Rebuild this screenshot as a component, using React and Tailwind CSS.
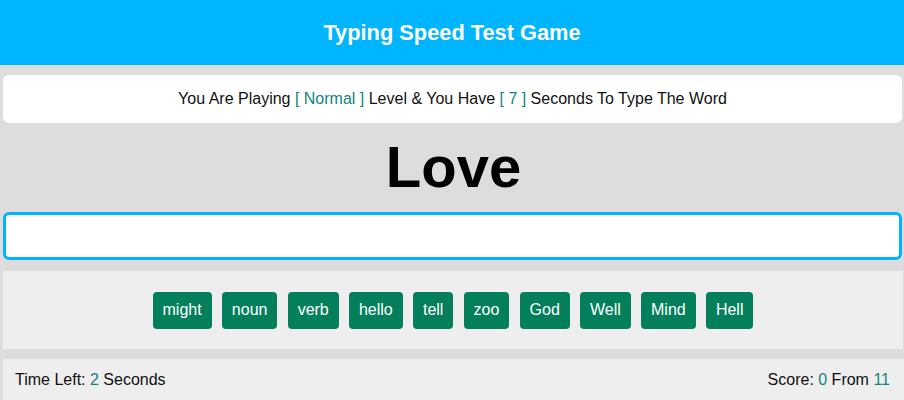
import React from "react";

const words = ["might", "noun", "verb", "hello", "tell", "zoo", "God", "Well", "Mind", "Hell"];

export default function App() {
  return (
    <div className="min-h-[400px] bg-[#dddddd] text-[#111] font-['Liberation_Sans',Arial,sans-serif]">
      <div className="h-[65px] bg-[#00b5ff] flex items-center justify-center">
        <h1 className="text-white font-bold text-[21.8px] leading-none">Typing Speed Test Game</h1>
      </div>
      <div className="mt-[10px] mx-[3px] mr-[2px] h-[48px] bg-white rounded-[6px] flex items-center justify-center text-[16px]">
        <span>
          You Are Playing <span className="text-[#128380]">[ Normal ]</span> Level &amp; You Have{" "}
          <span className="text-[#128380]">[ 7 ]</span> Seconds To Type The Word
        </span>
      </div>
      <div className="mt-[14px] mb-[15px] h-[60px] pl-[3px] text-center text-[58px] leading-[60px] font-bold text-black">Love</div>
      <input
        className="block mx-[3px] w-[899px] h-[48px] bg-white border-[3px] border-[#00b5ff] rounded-[6px] outline-none px-2 text-[16px]"
        type="text"
      />
      <div className="mt-[11px] mx-[3px] mr-[1px] h-[78px] bg-[#eeeeee] flex items-center justify-center gap-[10.2px]">
        {words.map((w) => (
          <span
            key={w}
            className="h-[37px] px-[10px] flex items-center bg-[#047f5b] text-white text-[16px] rounded-[4px]"
          >
            {w}
          </span>
        ))}
      </div>
      <div className="mt-[10px] ml-[3px] h-[41px] bg-[#eeeeee] flex items-center justify-between pl-[12px] pr-[14px] text-[16px]">
        <span>
          Time Left: <span className="text-[#128380]">2</span> Seconds
        </span>
        <span>
          Score: <span className="text-[#128380]">0</span> From <span className="text-[#128380]">11</span>
        </span>
      </div>
    </div>
  );
}
